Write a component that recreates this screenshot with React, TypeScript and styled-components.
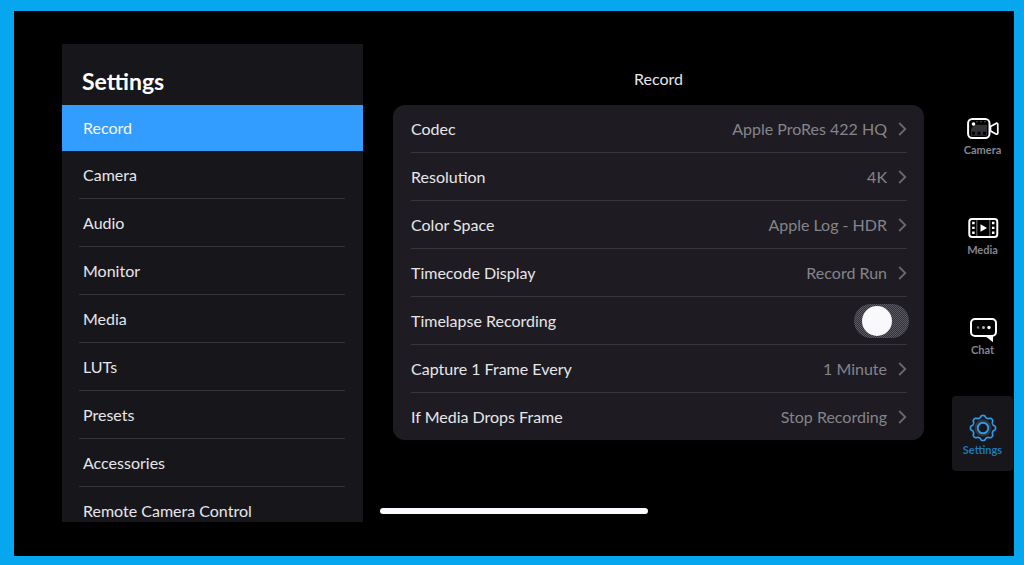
import React, { useState } from "react";
import styled, { createGlobalStyle } from "styled-components";

const GlobalStyle = createGlobalStyle`
  * { box-sizing: border-box; }
  body { margin: 0; background: #07a7f0; }
  button, input, a { font: inherit; }
`;

const Frame = styled.div`
  height: 100vh;
  padding: 11px 10px 9px 14px;
  background: #07a7f0;
  font-family: Lato, "Open Sans", sans-serif;
  font-size: 16px;
  line-height: 24px;
  color: #e6e6ea;
`;

const Device = styled.div`
  position: relative;
  display: flex;
  height: 100%;
  padding: 33px 1px 34px 48px;
  background: #000;
`;

const Sidebar = styled.aside`
  display: flex;
  flex-direction: column;
  flex: 0 0 301px;
  min-height: 0;
  overflow: hidden;
  background: #17161b;
`;

const SidebarTitle = styled.h1`
  flex: none;
  margin: 0;
  padding: 21px 20px 8px;
  font-size: 23px;
  line-height: 32px;
  font-weight: 700;
  color: #fff;
`;

const MenuList = styled.nav`
  display: flex;
  flex-direction: column;
`;

const MenuItem = styled.button<{ $active: boolean }>`
  flex: none;
  height: ${(p) => (p.$active ? 46 : 48)}px;
  padding: 0 18px 0 17px;
  border: 0;
  text-align: left;
  color: ${(p) => (p.$active ? "#f4f6fa" : "inherit")};
  background: ${(p) => (p.$active ? "#339dff" : "transparent")};
  cursor: pointer;
`;

const MenuLabel = styled.span<{ $line: boolean }>`
  display: flex;
  align-items: center;
  height: 100%;
  padding-left: 4px;
  border-bottom: 1px solid ${(p) => (p.$line ? "#333238" : "transparent")};
`;

const Content = styled.main`
  flex: 1;
  min-width: 0;
  padding: 23px 28px 0 30px;
`;

const PageTitle = styled.h2`
  margin: 0 0 14px;
  font-size: 16px;
  line-height: 24px;
  font-weight: 400;
  text-align: center;
`;

const Card = styled.section`
  padding: 0 17px 0 18px;
  border-radius: 12px;
  background: #1e1c22;
`;

const Row = styled.div`
  display: flex;
  align-items: center;
  justify-content: space-between;
  height: 48px;
  border-bottom: 1px solid #37363c;

  &:last-child {
    height: 47px;
    border-bottom: 0;
  }
`;

const RowLabel = styled.label`
  color: #e6e6ea;
`;

const RowValue = styled.button`
  display: flex;
  align-items: center;
  gap: 11px;
  padding: 0;
  border: 0;
  background: none;
  color: #85848a;
  cursor: pointer;
`;

const Toggle = styled.input`
  appearance: none;
  flex: none;
  width: 55px;
  height: 34px;
  margin: 0 -2px 0 0;
  padding: 2px 8px;
  border-radius: 17px;
  background: repeating-conic-gradient(#323138 0 25%, #5b5a62 0 50%) 0 0 / 2px 2px;
  cursor: pointer;

  &::before {
    content: "";
    display: block;
    width: 30px;
    height: 30px;
    border-radius: 50%;
    background: #f9f9fc;
  }

  &:checked {
    padding-left: 22px;
    background: #339dff;
  }
`;

const Rail = styled.nav`
  display: flex;
  flex-direction: column;
  flex: 0 0 61px;
  gap: 25px;
  padding-top: 52px;
`;

const RailLink = styled.a<{ $active?: boolean }>`
  display: flex;
  flex-direction: column;
  align-items: center;
  flex: none;
  height: 75px;
  padding-top: 17px;
  border-radius: 4px;
  font-size: 11px;
  line-height: 14px;
  font-weight: 700;
  text-decoration: none;
  color: ${(p) => (p.$active ? "#1d78b8" : "#85848f")};
  background: ${(p) => (p.$active ? "#17161b" : "transparent")};
`;

const HomeBar = styled.div`
  position: absolute;
  left: 50%;
  bottom: 42px;
  width: 268px;
  height: 6px;
  border-radius: 3px;
  background: #fafaff;
  transform: translateX(-50%);
`;

const Chevron = () => (
  <svg width="9" height="14" viewBox="0 0 9 14" fill="none" stroke="#69686e" strokeWidth="1.8" aria-hidden="true">
    <path d="M1.200 1 7.300 7 1.200 13" />
  </svg>
);

const CameraIcon = () => (
  <svg width="34" height="30" viewBox="0 0 34 30" fill="none" aria-hidden="true">
    <rect x="2.1" y="6" width="21.4" height="19" rx="4.2" stroke="#fff" strokeWidth="2" />
    <path d="M5 16.300 8 11.800h13v11H5z" fill="#303036" />
    <circle cx="7.5" cy="11" r="1.8" fill="#fff" />
    <path d="M6 20.300h3M11.500 20.300h3M17 20.300h3" stroke="#000" strokeWidth="3" />
    <path d="M10 8.800h10" stroke="#55555b" strokeDasharray="2 2" />
    <path d="M24.500 13.500 30 10.400q1.800-.7 1.800 1.200v8.200q0 1.900-1.800 1.200l-5.500-3.100z" stroke="#fff" strokeWidth="1.700" strokeLinejoin="round" />
  </svg>
);

const MediaIcon = () => (
  <svg width="34" height="30" viewBox="0 0 34 30" fill="none" aria-hidden="true">
    <rect x="3.300" y="6" width="28" height="18" rx="2.700" stroke="#fff" strokeWidth="2" />
    <path d="M10.800 7v16M23.800 7v16" stroke="#77777c" strokeWidth="1" />
    <path d="M7.400 8.800v13M27.200 8.800v13" stroke="#fff" strokeWidth="2.500" strokeDasharray="2.400 2.500" />
    <path d="m14.500 11.200 6.500 3.800-6.500 3.800z" fill="#fff" />
  </svg>
);

const ChatIcon = () => (
  <svg width="34" height="30" viewBox="0 0 34 30" fill="none" aria-hidden="true">
    <rect x="5" y="6" width="25" height="17" rx="4" stroke="#fff" strokeWidth="2" />
    <path d="M18.500 22.500H27v6.800z" fill="#fff" />
    <circle cx="12" cy="14.500" r="1.200" fill="#77777c" />
    <circle cx="17.500" cy="14.500" r="1.500" fill="#b5b5ba" />
    <circle cx="23" cy="14.500" r="1.700" fill="#fff" />
  </svg>
);

const gearPath = (() => {
  const points: string[] = [];
  for (let i = 0; i <= 160; i++) {
    const a = (i / 160) * Math.PI * 2;
    const r = 11.5 + 1.15 * Math.tanh(1.5 * Math.cos(a * 8));
    points.push(`${(17 + r * Math.sin(a)).toFixed(2)} ${(15 - r * Math.cos(a)).toFixed(2)}`);
  }
  return `M${points.join("L")}Z`;
})();

const GearIcon = () => (
  <svg width="34" height="30" viewBox="0 0 34 30" fill="none" stroke="#2c9be8" aria-hidden="true">
    <path d={gearPath} strokeWidth="1.700" />
    <circle cx="17" cy="15" r="7.500" stroke="#34343b" strokeWidth="2" />
    <circle cx="17" cy="15" r="5.300" strokeWidth="2" />
  </svg>
);

const menu = ["Record", "Camera", "Audio", "Monitor", "Media", "LUTs", "Presets", "Accessories", "Remote Camera Control"];

const settings: { id: string; label: string; value?: string }[] = [
  { id: "codec", label: "Codec", value: "Apple ProRes 422 HQ" },
  { id: "resolution", label: "Resolution", value: "4K" },
  { id: "color-space", label: "Color Space", value: "Apple Log - HDR" },
  { id: "timecode", label: "Timecode Display", value: "Record Run" },
  { id: "timelapse", label: "Timelapse Recording" },
  { id: "interval", label: "Capture 1 Frame Every", value: "1 Minute" },
  { id: "drops", label: "If Media Drops Frame", value: "Stop Recording" },
];

const tabs = [
  { label: "Camera", Icon: CameraIcon },
  { label: "Media", Icon: MediaIcon },
  { label: "Chat", Icon: ChatIcon },
  { label: "Settings", Icon: GearIcon, active: true },
];

export default function App() {
  const [section, setSection] = useState("Record");
  const [timelapse, setTimelapse] = useState(false);

  return (
    <>
      <GlobalStyle />
      <Frame>
        <Device>
          <Sidebar>
            <SidebarTitle>Settings</SidebarTitle>
            <MenuList>
              {menu.map((name) => (
                <MenuItem key={name} type="button" $active={name === section} onClick={() => setSection(name)}>
                  <MenuLabel $line={name !== section}>{name}</MenuLabel>
                </MenuItem>
              ))}
            </MenuList>
          </Sidebar>
          <Content>
            <PageTitle>{section}</PageTitle>
            <Card>
              {settings.map(({ id, label, value }) => (
                <Row key={id}>
                  <RowLabel htmlFor={id}>{label}</RowLabel>
                  {value ? (
                    <RowValue id={id} type="button">
                      {value}
                      <Chevron />
                    </RowValue>
                  ) : (
                    <Toggle
                      id={id}
                      type="checkbox"
                      role="switch"
                      checked={timelapse}
                      onChange={(e) => setTimelapse(e.target.checked)}
                    />
                  )}
                </Row>
              ))}
            </Card>
          </Content>
          <Rail>
            {tabs.map(({ label, Icon, active }) => (
              <RailLink key={label} href={`#${label.toLowerCase()}`} $active={active}>
                <Icon />
                {label}
              </RailLink>
            ))}
          </Rail>
          <HomeBar />
        </Device>
      </Frame>
    </>
  );
}
